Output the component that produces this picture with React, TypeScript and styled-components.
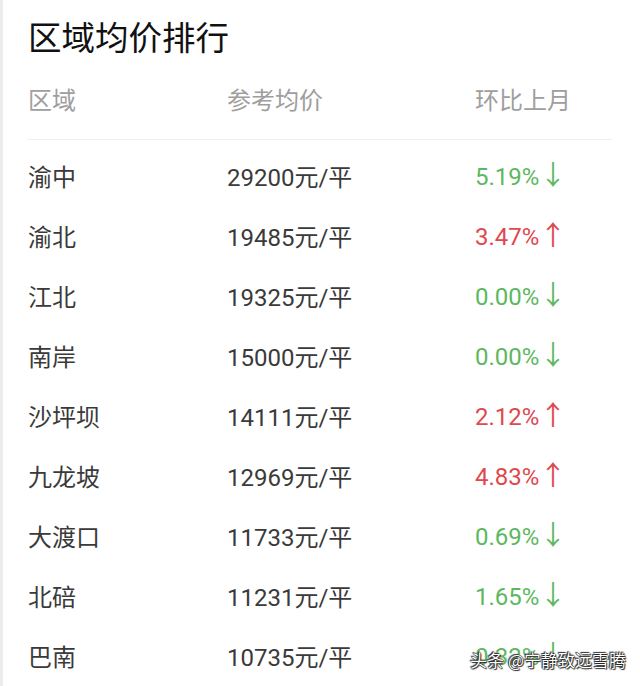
import React from "react";
import styled, { createGlobalStyle } from "styled-components";

const Global = createGlobalStyle`
  html, body { margin: 0; padding: 0; background: #fff; }
  body { font-family: Roboto, "Noto Sans CJK SC", sans-serif; }
`;

const Page = styled.div`
  position: relative;
  width: 640px;
  height: 686px;
  box-sizing: border-box;
  overflow: hidden;
  background: #fff;
  border-left: 3px solid #ececec;
  padding: 14px 28px 0 24px;
`;

const Title = styled.h1`
  margin: 0;
  font-family: "Noto Sans CJK SC", sans-serif;
  font-weight: 400;
  font-size: 33.5px;
  line-height: 44px;
  color: #111;
  padding-left: 1px;
`;

const Row = styled.div<{ $header?: boolean }>`
  display: grid;
  grid-template-columns: 199px 248px 1fr;
  align-items: center;
  height: 60px;
  padding-left: 1px;
  margin-top: ${(p) => (p.$header ? "10px" : "0")};
  font-size: 24px;
  color: ${(p) => (p.$header ? "#9e9e9e" : "#3a3a3a")};
`;

const Cell = styled.span`
  font-family: Roboto, "Noto Sans CJK SC", sans-serif;
  white-space: nowrap;
`;

const Change = styled.span<{ $up: boolean }>`
  font-family: Roboto, "Noto Sans CJK SC", sans-serif;
  white-space: nowrap;
  color: ${(p) => (p.$up ? "#e0484e" : "#5cb860")};
`;

const Arrow = styled.span`
  font-family: "Noto Sans CJK SC", sans-serif;
  font-size: 27px;
  line-height: 1;
  margin-left: 0;
`;

const Divider = styled.div`
  height: 1px;
  background: #efefef;
  margin: 11px 0 5px 0;
`;

const Watermark = styled.div`
  position: absolute;
  right: 14px;
  bottom: 16px;
  font-family: "Noto Sans CJK SC", sans-serif;
  font-size: 17px;
  line-height: 20px;
  color: #fff;
  text-shadow: 0 0 1px #000, 0 0 1px #000, 1px 1px 1px #333, -1px -1px 1px #333;
  white-space: nowrap;
`;

const data: [string, string, string, boolean][] = [
  ["渝中", "29200", "5.19%", false],
  ["渝北", "19485", "3.47%", true],
  ["江北", "19325", "0.00%", false],
  ["南岸", "15000", "0.00%", false],
  ["沙坪坝", "14111", "2.12%", true],
  ["九龙坡", "12969", "4.83%", true],
  ["大渡口", "11733", "0.69%", false],
  ["北碚", "11231", "1.65%", false],
  ["巴南", "10735", "0.32%", false],
];

export default function App() {
  return (
    <>
      <Global />
      <Page>
        <Title>区域均价排行</Title>
        <Row $header>
          <Cell>区域</Cell>
          <Cell>参考均价</Cell>
          <Cell>环比上月</Cell>
        </Row>
        <Divider />
        {data.map(([name, price, pct, up]) => (
          <Row key={name}>
            <Cell>{name}</Cell>
            <Cell>{price}元/平</Cell>
            <Change $up={up}>
              {pct}
              <Arrow>{up ? "↑" : "↓"}</Arrow>
            </Change>
          </Row>
        ))}
        <Watermark>头条 @宁静致远雪腾</Watermark>
      </Page>
    </>
  );
}
